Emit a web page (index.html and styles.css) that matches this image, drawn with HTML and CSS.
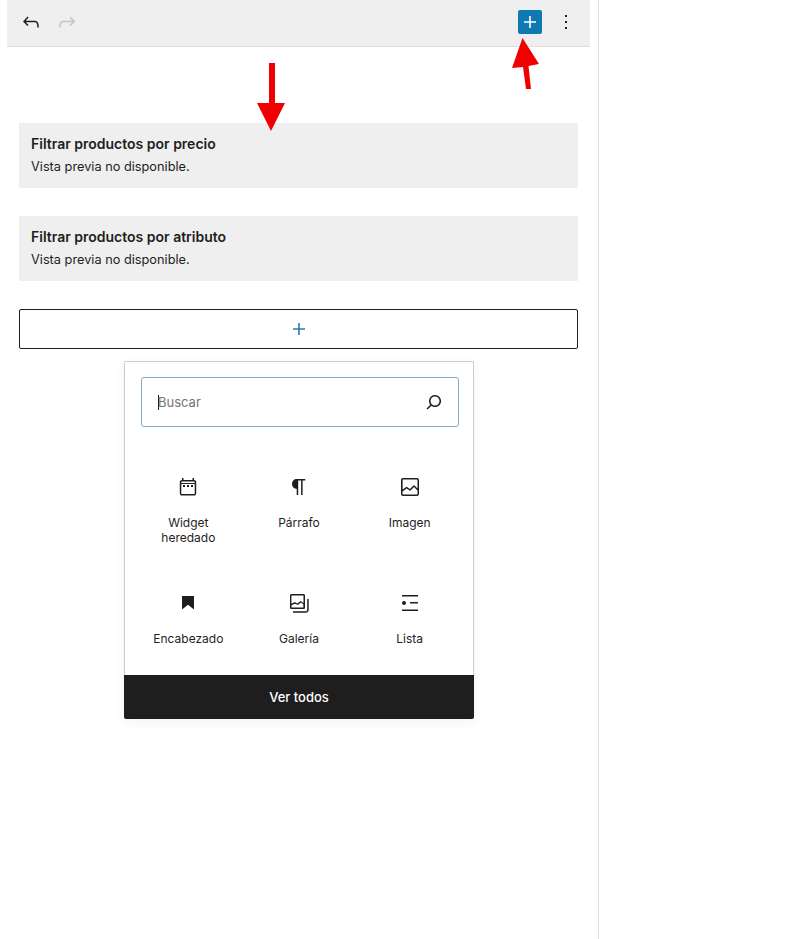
FILE: index.html
```html
<!DOCTYPE html>
<html lang="es">
<head>
    <meta charset="UTF-8">
    <meta name="viewport" content="width=device-width, initial-scale=1.0">
    <title>Editor de widgets</title>
    <link rel="stylesheet" href="styles.css">
</head>
<body>
    <div class="editor">
        <div class="toolbar">
            <div class="toolbar-group">
                <button class="tool-button">
                    <svg viewBox="0 0 24 24" class="icon"><path d="M18.3 11.7c-.6-.6-1.4-.9-2.3-.9H6.7l2.9-3.3-1.1-1-4.5 5L8.5 16l1-1-2.7-2.7H16c.5 0 .9.2 1.3.5 1 1 1 3.4 1 4.5v.3h1.5v-.2c0-1.5 0-4.3-1.5-5.7z"/></svg>
                </button>
                <button class="tool-button disabled">
                    <svg viewBox="0 0 24 24" class="icon"><path d="M15.6 6.5l-1.1 1 2.9 3.3H8c-.9 0-1.7.3-2.3.9-1.4 1.5-1.4 4.2-1.4 5.6v.2h1.5v-.3c0-1.1 0-3.5 1-4.5.3-.3.7-.5 1.3-.5h9.2L14.5 15l1.1 1.1 4.6-4.6-4.6-5z"/></svg>
                </button>
            </div>
            <div class="toolbar-group">
                <button class="tool-button">
                    <span class="add-square">
                        <svg viewBox="0 0 24 24" class="icon"><path d="M18 11.2h-5.2V6h-1.6v5.2H6v1.6h5.2V18h1.6v-5.2H18z"/></svg>
                    </span>
                </button>
                <button class="tool-button">
                    <svg viewBox="0 0 24 24" class="icon"><path d="M13 19h-2v-2h2v2zm0-6h-2v-2h2v2zm0-6h-2V5h2v2z"/></svg>
                </button>
            </div>
        </div>

        <div class="content">
            <div class="block-preview">
                <h3>Filtrar productos por precio</h3>
                <p>Vista previa no disponible.</p>
            </div>
            <div class="block-preview">
                <h3>Filtrar productos por atributo</h3>
                <p>Vista previa no disponible.</p>
            </div>
            <div class="appender">
                <svg viewBox="0 0 24 24" class="icon"><path d="M18 11.2h-5.2V6h-1.6v5.2H6v1.6h5.2V18h1.6v-5.2H18z"/></svg>
            </div>

            <div class="inserter">
                <div class="inserter-body">
                    <div class="search-field">
                        <span class="caret"></span>
                        <input type="text" placeholder="Buscar">
                        <svg viewBox="0 0 24 24" class="icon"><path d="M13 5c-3.3 0-6 2.7-6 6 0 1.4.5 2.7 1.3 3.7l-3.8 3.8 1.1 1.1 3.8-3.8c1 .8 2.3 1.3 3.7 1.3 3.3 0 6-2.7 6-6S16.3 5 13 5zm0 10.5c-2.5 0-4.5-2-4.5-4.5s2-4.5 4.5-4.5 4.5 2 4.5 4.5-2 4.5-4.5 4.5z"/></svg>
                    </div>
                    <div class="block-grid">
                        <div class="block-item">
                            <svg viewBox="0 0 24 24" class="icon"><path d="M6 3h1.500v2h9V3H18v2h.1c1.200 0 2.100.9 2.100 2.100v11.400c0 1.200-.9 2.100-2.100 2.100H5.900c-1.200 0-2.100-.9-2.100-2.100V7.100C3.800 5.900 4.700 5 5.900 5H6V3zM5.300 8h13.400v-.9c0-.4-.2-.6-.6-.6H5.900c-.4 0-.6.2-.6.6V8zm0 1v9.500c0 .4.2.6.6.6h12.200c.4 0 .6-.2.6-.6V9H5.300zM7 10h2v2H7v-2zm4 0h2v2h-2v-2zm4 0h2v2h-2v-2z" fill-rule="evenodd"/></svg>
                            <span>Widget heredado</span>
                        </div>
                        <div class="block-item">
                            <svg viewBox="0 0 24 24" class="icon"><path d="M18.300 4H9.900v-.1l-.9.2c-2.300.4-4 2.400-4 4.800s1.700 4.400 4 4.800l.7.1V20h1.500V5.500h2.900V20h1.500V5.500h2.700V4z"/></svg>
                            <span>Párrafo</span>
                        </div>
                        <div class="block-item">
                            <svg viewBox="0 0 24 24" class="icon"><path d="M19 3H5c-1.100 0-2 .9-2 2v14c0 1.100.9 2 2 2h14c1.100 0 2-.9 2-2V5c0-1.100-.9-2-2-2zM5 4.500h14c.3 0 .5.2.5.5v8.400l-3-2.900c-.3-.3-.8-.3-1 0L11.900 14 9 12c-.3-.2-.6-.2-.8 0l-3.600 2.600V5c-.1-.3.1-.5.4-.5zm14 15H5c-.3 0-.5-.2-.5-.5v-2.400l4.100-3 3 1.900c.3.200.7.200.9-.1L16 12l3.500 3.400V19c0 .3-.2.5-.5.5z"/></svg>
                            <span>Imagen</span>
                        </div>
                        <div class="block-item">
                            <svg viewBox="0 0 24 24" class="icon"><path d="M6 5v13.600l6-4.750 6 4.750V5H6z"/></svg>
                            <span>Encabezado</span>
                        </div>
                        <div class="block-item">
                            <svg viewBox="0 0 24 24" class="icon"><path d="M20.200 8v11c0 .7-.6 1.300-1.300 1.300H6v1.500h12.900c1.500 0 2.800-1.200 2.800-2.800V8zM18 16.400V4.600c0-.9-.7-1.600-1.600-1.600H4.600C3.700 3 3 3.700 3 4.600v11.800c0 .9.7 1.600 1.600 1.600h11.800c.9 0 1.600-.7 1.600-1.600zM4.500 4.600c0-.1.1-.1.1-.1h11.800c.1 0 .1.1.1.1V12l-2.300-1.700c-.3-.2-.6-.2-.9 0l-2.900 2.100L8 11.300c-.2-.1-.5-.1-.7 0l-2.900 1.500V4.600zm.1 12c-.1 0-.1-.1-.1-.1v-2.200l3.200-1.600 2.800 1.100c.2.100.5.100.7-.1l2.900-2.100 2.200 1.600v3.200c0 .1-.1.1-.1.1H4.600z"/></svg>
                            <span>Galería</span>
                        </div>
                        <div class="block-item">
                            <svg viewBox="0 0 24 24" class="icon"><path d="M4 4v1.500h16V4H4zm8 8.500h8V11h-8v1.500zM4 20h16v-1.500H4V20zm4-8c0-1.100-.9-2-2-2s-2 .9-2 2 .9 2 2 2 2-.9 2-2z"/></svg>
                            <span>Lista</span>
                        </div>
                    </div>
                </div>
                <button class="browse-all">Ver todos</button>
            </div>
        </div>
    </div>

    <!-- red annotation arrows drawn over the screenshot -->
    <svg class="annotations" viewBox="0 0 810 939">
        <polygon points="269,63 275,63 275,103 285,103 271,131 257,103 269,103"/>
        <polygon points="522.500,38 539,64 528.500,66 531,89 526,89 523,67 512,68"/>
    </svg>
</body>
</html>
```

FILE: styles.css
```css
body {
    font-family: Inter, "Liberation Sans", sans-serif;
    margin: 0;
    background: white;
    color: #1e1e1e;
}
.editor {
    position: relative;
    width: 598px;
    min-height: 939px;
    border-right: 1px solid #dddddd;
}
.icon {
    display: block;
    width: 24px;
    height: 24px;
    fill: currentColor;
}
.toolbar {
    display: flex;
    justify-content: space-between;
    align-items: center;
    height: 44px;
    margin: 0 8px 0 7px;
    padding: 0 6px 2px;
    background: #efefef;
    border-bottom: 1px solid #e0e0e0;
}
.toolbar-group {
    display: flex;
}
.tool-button {
    display: flex;
    justify-content: center;
    align-items: center;
    width: 36px;
    height: 36px;
    padding: 0;
    border: none;
    background: none;
    color: #1e1e1e;
}
.tool-button.disabled {
    color: #c4c4c4;
}
.add-square {
    width: 24px;
    height: 24px;
    border-radius: 2px;
    background: #1079b2;
    color: white;
}
.content {
    padding: 76px 20px 0 19px;
}
.block-preview {
    height: 65px;
    box-sizing: border-box;
    margin-bottom: 28px;
    padding: 12px 12px;
    background: #efefef;
}
.block-preview h3 {
    margin: 0 0 6px;
    font-size: 14px;
    line-height: 17px;
    font-weight: 600;
}
.block-preview p {
    margin: 0;
    font-size: 12.75px;
    line-height: 18px;
}
.appender {
    display: flex;
    justify-content: center;
    align-items: center;
    height: 38px;
    border: 1px solid #1e1e1e;
    border-radius: 2px;
    color: #2d7ea8;
}
.inserter {
    width: 350px;
    margin: 12px 0 0 105px;
    border-radius: 2px;
    box-shadow: 0 3px 12px rgba(0,0,0,0.05);
}
.inserter-body {
    padding: 15px 0 0;
    border: 1px solid #cccccc;
    border-bottom: none;
    border-radius: 2px 2px 0 0;
}
.search-field {
    display: flex;
    align-items: center;
    height: 48px;
    margin: 0 14px 0 16px;
    padding: 0 12px 0 16px;
    border: 1px solid #7fa9c4;
    border-radius: 3px;
}
.search-field input {
    flex: 1;
    min-width: 0;
    padding: 0;
    border: none;
    outline: none;
    background: transparent;
    font-family: inherit;
    font-size: 13px;
}
.search-field input::placeholder {
    color: #757575;
    opacity: 1;
}
.caret {
    flex: none;
    width: 1px;
    height: 15px;
    margin-right: -1px;
    background: #1e1e1e;
}
.block-grid {
    display: grid;
    grid-template-columns: repeat(3, 1fr);
    row-gap: 46px;
    padding: 48px 8px 29px;
}
.block-item {
    display: flex;
    flex-direction: column;
    align-items: center;
    font-size: 12px;
    line-height: 15px;
    text-align: center;
}
.block-item span {
    margin-top: 16px;
    padding: 0 20px;
}
.browse-all {
    display: block;
    width: 100%;
    height: 44px;
    padding: 0;
    border: none;
    border-radius: 0 0 2px 2px;
    background: #1e1e1e;
    color: white;
    font-family: inherit;
    font-size: 13px;
    font-weight: 500;
}
.annotations {
    position: absolute;
    top: 0;
    left: 0;
    width: 810px;
    height: 939px;
    fill: #f00000;
    pointer-events: none;
}
```
